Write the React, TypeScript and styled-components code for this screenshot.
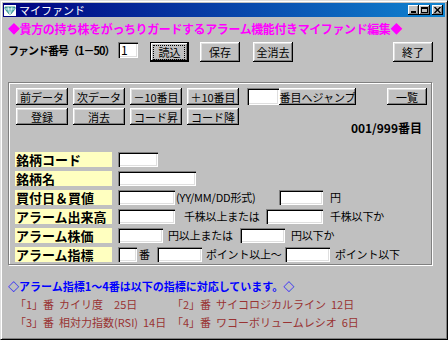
import styled, { createGlobalStyle } from "styled-components";

const jp = `"Noto Sans CJK JP", "Noto Sans", sans-serif`;

const GlobalStyle = createGlobalStyle`
  html, body {
    margin: 0;
    padding: 0;
    background: #c0c0c0;
  }
  body {
    font-family: ${jp};
  }
`;

const Window = styled.div`
  width: 448px;
  height: 340px;
  box-sizing: border-box;
  background: #c0c0c0;
  border-top: 1px solid #dfdfdf;
  border-left: 1px solid #dfdfdf;
  border-right: 1px solid #000;
  border-bottom: 1px solid #000;
  box-shadow: inset 1px 1px #fff, inset -1px -1px #808080;
  padding: 2px;
  display: flex;
  flex-direction: column;
  overflow: hidden;
`;

const TitleBar = styled.div`
  height: 14px;
  flex-shrink: 0;
  display: flex;
  align-items: center;
  padding: 0 2px 0 1px;
  background: linear-gradient(to right, #000080, #1084d0);
  color: #fff;
  font-size: 11px;
  line-height: 14px;
`;

const TitleText = styled.span`
  margin-left: 3px;
  flex: 1;
`;

const CtrlBtn = styled.div<{ $gap?: number }>`
  width: 11px;
  height: 10px;
  box-sizing: border-box;
  margin-left: ${({ $gap }) => $gap ?? 0}px;
  background: #c0c0c0;
  box-shadow: inset -1px -1px #000, inset 1px 1px #fff, inset -2px -2px #808080;
  display: flex;
  align-items: center;
  justify-content: center;
`;

const Client = styled.div`
  flex: 1;
  display: flex;
  flex-direction: column;
  padding: 0 0 0 5px;
  & > * {
    flex-shrink: 0;
  }
`;

const Heading = styled.div`
  margin-top: 4px;
  height: 16px;
  line-height: 16px;
  color: #ff00ff;
  font-size: 12px;
  font-weight: bold;
  letter-spacing: -0.4px;
  white-space: nowrap;
`;

const TopRow = styled.div`
  margin-top: 5px;
  height: 20px;
  display: flex;
  align-items: flex-start;
  padding-right: 12px;
`;

const FundLabel = styled.span`
  width: 110px;
  height: 16px;
  line-height: 16px;
  font-size: 11px;
  font-weight: bold;
  white-space: nowrap;
  letter-spacing: -1px;
  flex-shrink: 0;
`;

const Field = styled.div<{ $w: number; $h?: number; $ml?: number }>`
  width: ${({ $w }) => $w}px;
  height: ${({ $h }) => $h ?? 15}px;
  margin-left: ${({ $ml }) => $ml ?? 0}px;
  box-sizing: border-box;
  flex-shrink: 0;
  background: #fff;
  box-shadow: inset 1px 1px #808080, inset 2px 2px #000, inset -1px -1px #fff, inset -2px -2px #dfdfdf;
  font-size: 12px;
  line-height: 16px;
  padding-left: 3px;
  color: #000;
`;

const Button = styled.div<{ $w: number; $h?: number; $ml?: number; $default?: boolean }>`
  position: relative;
  width: ${({ $w }) => $w}px;
  height: ${({ $h }) => $h ?? 17}px;
  margin-left: ${({ $ml }) => $ml ?? 0}px;
  box-sizing: border-box;
  flex-shrink: 0;
  background: #c0c0c0;
  box-shadow: ${({ $default }) =>
    $default
      ? "inset 0 0 0 1px #000, inset -2px -2px #000, inset 2px 2px #fff, inset -3px -3px #808080"
      : "inset -1px -1px #000, inset 1px 1px #fff, inset -2px -2px #808080, inset 2px 2px #dfdfdf"};
  display: flex;
  align-items: center;
  justify-content: center;
  font-size: 11px;
  color: #000;
  white-space: nowrap;
  &::after {
    content: "";
    display: ${({ $default }) => ($default ? "block" : "none")};
    position: absolute;
    inset: 4px 5px 3px 4px;
    outline: 1px dotted #000;
  }
`;

const Spacer = styled.div`
  flex: 1;
`;

const Group = styled.div`
  margin-top: 20px;
  width: 424px;
  height: 183px;
  box-sizing: border-box;
  border: 1px solid #808080;
  box-shadow: inset 1px 1px #fff, 1px 1px #fff;
  padding: 5px 4px 0 7px;
  display: flex;
  flex-direction: column;
`;

const ButtonRow = styled.div<{ $mt?: number }>`
  display: flex;
  align-items: flex-start;
  gap: 5px;
  margin-top: ${({ $mt }) => $mt ?? 0}px;
`;

const Counter = styled.span`
  margin-left: auto;
  margin-right: 5px;
  padding-top: 12px;
  line-height: 16px;
  font-size: 12px;
  font-weight: bold;
`;

const Form = styled.div`
  margin-top: 16px;
  display: flex;
  flex-direction: column;
  gap: 4px;
`;

const FormRow = styled.div`
  display: flex;
  align-items: center;
  height: 15px;
`;

const FieldLabel = styled.span`
  width: 97px;
  height: 15px;
  margin-left: -1px;
  margin-right: 6px;
  background: #ffffc0;
  font-size: 13px;
  font-weight: bold;
  line-height: 15px;
  padding-left: 1px;
  box-sizing: border-box;
  white-space: nowrap;
  flex-shrink: 0;
`;

const Note = styled.span<{ $w?: number; $pl?: number }>`
  width: ${({ $w }) => ($w ? `${$w}px` : "auto")};
  padding-left: ${({ $pl }) => $pl ?? 0}px;
  box-sizing: border-box;
  font-size: 11px;
  line-height: 15px;
  white-space: nowrap;
  flex-shrink: 0;
  letter-spacing: -0.2px;
`;

const Info = styled.div`
  margin-top: 13px;
  display: flex;
  flex-direction: column;
`;

const InfoTitle = styled.div`
  height: 16px;
  color: #0000ff;
  font-size: 11px;
  font-weight: bold;
  line-height: 16px;
  white-space: nowrap;
`;

const IndexGrid = styled.div`
  margin-top: 2px;
  padding-left: 7px;
  display: grid;
  grid-template-columns: 157px auto;
  grid-auto-rows: 16px;
  row-gap: 2px;
`;

const IndexItem = styled.span`
  color: #993333;
  font-size: 11px;
  line-height: 16px;
  white-space: pre;
`;

const AppIcon = () => (
  <svg width="12" height="11" viewBox="0 0 12 11">
    <rect x="0" y="0" width="12" height="11" fill="#fff" />
    <path d="M1 2 L11 2 L11 4 L6 10 L1 4 Z" fill="#5fb8b8" stroke="#207878" strokeWidth="0.8" />
    <path d="M1 4 L11 4 M4 2 L6 10 L8 2" stroke="#fff" strokeWidth="0.7" fill="none" />
  </svg>
);

const indexes = [
  "「1」番  カイリ度　25日",
  "「2」番  サイコロジカルライン  12日",
  "「3」番  相対力指数(RSI)  14日",
  "「4」番  ワコーボリュームレシオ  6日",
];

const App = () => {
  return (
    <>
      <GlobalStyle />
      <Window>
        <TitleBar>
          <AppIcon />
          <TitleText>マイファンド</TitleText>
          <CtrlBtn>
            <svg width="6" height="6" viewBox="0 0 6 6">
              <rect x="0" y="4" width="5" height="2" fill="#000" />
            </svg>
          </CtrlBtn>
          <CtrlBtn>
            <svg width="7" height="6" viewBox="0 0 7 6">
              <rect x="0.5" y="0.5" width="6" height="5" fill="none" stroke="#000" />
              <rect x="0" y="0" width="7" height="2" fill="#000" />
            </svg>
          </CtrlBtn>
          <CtrlBtn $gap={2}>
            <svg width="7" height="6" viewBox="0 0 7 6">
              <path d="M0.5 0 L6.5 6 M6.5 0 L0.5 6" stroke="#000" strokeWidth="1.4" />
            </svg>
          </CtrlBtn>
        </TitleBar>
        <Client>
          <Heading>◆貴方の持ち株をがっちりガードするアラーム機能付きマイファンド編集◆</Heading>
          <TopRow>
            <FundLabel>ファンド番号（1－50）</FundLabel>
            <Field $w={20} $h={16}>1</Field>
            <Button $w={39} $h={20} $ml={12} $default>読込</Button>
            <Button $w={40} $h={20} $ml={11}>保存</Button>
            <Button $w={40} $h={20} $ml={13}>全消去</Button>
            <Spacer />
            <Button $w={40} $h={20}>終了</Button>
          </TopRow>
          <Group>
            <ButtonRow>
              <Button $w={52}>前データ</Button>
              <Button $w={52}>次データ</Button>
              <Button $w={52}>－10番目</Button>
              <Button $w={52}>＋10番目</Button>
              <Field $w={32} $h={17} $ml={3} />
              <Button $w={77} $ml={-5}>番目へジャンプ</Button>
              <Spacer />
              <Button $w={40}>一覧</Button>
            </ButtonRow>
            <ButtonRow $mt={3}>
              <Button $w={52}>登録</Button>
              <Button $w={52}>消去</Button>
              <Button $w={52}>コード昇</Button>
              <Button $w={52}>コード降</Button>
              <Counter>001/999番目</Counter>
            </ButtonRow>
            <Form>
              <FormRow>
                <FieldLabel>銘柄コード</FieldLabel>
                <Field $w={40} />
              </FormRow>
              <FormRow>
                <FieldLabel>銘柄名</FieldLabel>
                <Field $w={78} />
              </FormRow>
              <FormRow>
                <FieldLabel>買付日＆買値</FieldLabel>
                <Field $w={57} />
                <Note $w={104} $pl={1}>(YY/MM/DD形式)</Note>
                <Field $w={44} />
                <Note $pl={7}>円</Note>
              </FormRow>
              <FormRow>
                <FieldLabel>アラーム出来高</FieldLabel>
                <Field $w={57} />
                <Note $w={91} $pl={9}>千株以上または</Note>
                <Field $w={57} />
                <Note $pl={7}>千株以下か</Note>
              </FormRow>
              <FormRow>
                <FieldLabel>アラーム株価</FieldLabel>
                <Field $w={45} />
                <Note $w={77} $pl={5}>円以上または</Note>
                <Field $w={45} />
                <Note $pl={6}>円以下か</Note>
              </FormRow>
              <FormRow>
                <FieldLabel>アラーム指標</FieldLabel>
                <Field $w={19} />
                <Note $w={20} $pl={2}>番</Note>
                <Field $w={45} />
                <Note $w={83} $pl={4}>ポイント以上～</Note>
                <Field $w={45} />
                <Note $pl={5}>ポイント以下</Note>
              </FormRow>
            </Form>
          </Group>
          <Info>
            <InfoTitle>◇アラーム指標1～4番は以下の指標に対応しています。◇</InfoTitle>
            <IndexGrid>
              {indexes.map((t) => (
                <IndexItem key={t}>{t}</IndexItem>
              ))}
            </IndexGrid>
          </Info>
        </Client>
      </Window>
    </>
  );
};

export default App;
